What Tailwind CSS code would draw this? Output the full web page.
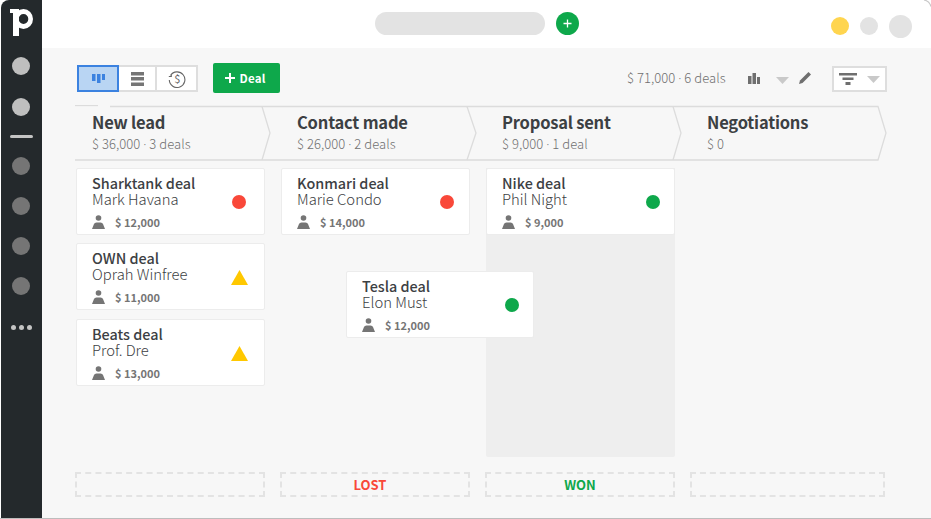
<!DOCTYPE html>
<html lang="en">
<head>
    <meta charset="UTF-8">
    <title>Pipeline</title>
    <script src="https://cdn.jsdelivr.net/npm/@tailwindcss/browser@4"></script>
</head>
<body class="bg-white overflow-hidden font-['Noto_Sans_CJK_SC','Noto_Sans',sans-serif]">
    <div class="relative flex w-[931px] h-[519px] overflow-hidden border-b border-[#bdbdbd] bg-white">
        <!-- sidebar -->
        <aside class="ml-px w-[41px] h-full shrink-0 bg-[#24292c] rounded-tl-[8px] flex flex-col items-center pr-px">
            <svg class="shrink-0" width="40" height="42" viewBox="0 0 40 42" fill="#fff">
                <path d="M9 9h9v27h-6V13H9z"/>
                <path fill-rule="evenodd" d="M22.500 9a9.500 10 0 1 1 0 20a9.500 10 0 0 1 0-20zm0 5a4.800 5 0 1 0 0 10a4.800 5 0 0 0 0-10z"/>
            </svg>
            <span class="mt-[15px] w-[18px] h-[18px] shrink-0 rounded-full bg-[#bfbfbf]"></span>
            <span class="mt-[23px] w-[18px] h-[18px] shrink-0 rounded-full bg-[#bfbfbf]"></span>
            <span class="mt-[19px] w-[23px] h-[3px] shrink-0 rounded-full bg-[#c4c4c4]"></span>
            <span class="mt-[19px] w-[18px] h-[18px] shrink-0 rounded-full bg-[#757575]"></span>
            <span class="mt-[22px] w-[18px] h-[18px] shrink-0 rounded-full bg-[#757575]"></span>
            <span class="mt-[22px] w-[18px] h-[18px] shrink-0 rounded-full bg-[#757575]"></span>
            <span class="mt-[22px] w-[18px] h-[18px] shrink-0 rounded-full bg-[#757575]"></span>
            <span class="mt-[30px] flex gap-[3px]">
                <i class="w-[5px] h-[5px] rounded-full bg-[#c4c4c4]"></i>
                <i class="w-[5px] h-[5px] rounded-full bg-[#c4c4c4]"></i>
                <i class="w-[5px] h-[5px] rounded-full bg-[#c4c4c4]"></i>
            </span>
        </aside>

        <main class="flex-1 flex flex-col bg-[#f7f7f7]">
            <!-- top bar -->
            <header class="relative h-[48px] shrink-0 bg-white flex items-center">
                <div class="ml-[333px] -mt-px w-[170px] h-[23px] rounded-full bg-[#e3e3e3]"></div>
                <div class="ml-[11px] -mt-px w-[23px] h-[23px] rounded-full bg-[#0ea84b] flex items-center justify-center">
                    <svg width="11" height="11" viewBox="0 0 11 11"><path d="M5.500 1.500v8M1.500 5.500h8" stroke="#fff" stroke-width="1.300"/></svg>
                </div>
                <div class="ml-[252px] mt-[4px] w-[18px] h-[18px] rounded-full bg-[#ffd54f]"></div>
                <div class="ml-[11px] mt-[4px] w-[18px] h-[18px] rounded-full bg-[#e3e3e3]"></div>
                <div class="ml-[11px] mt-[4px] w-[23px] h-[23px] rounded-full bg-[#e3e3e3]"></div>
                <svg class="absolute right-0 top-0" width="8" height="7" viewBox="0 0 8 7" fill="none"><path d="M1 0C4 0.500 7 3 8 6.500" stroke="#c8c8c8" stroke-width="1.200"/></svg>
            </header>

            <!-- toolbar -->
            <div class="h-[57px] shrink-0 flex items-center pl-[35px] pt-[3px]">
                <div class="flex h-[27px] mt-px w-[121px] border-2 border-[#dedede] bg-white">
                    <div class="w-[42px] -ml-[2px] -my-[2px] h-[27px] border-2 border-[#3b82e0] bg-[#b9d5f3] flex items-center justify-center">
                        <svg width="13" height="9" viewBox="0 0 13 9"><path d="M0 0h3.500v7H0zM5 0h3.500v9H5zM10 0h3v6h-3z" fill="#3b82e0"/></svg>
                    </div>
                    <div class="w-[38px] flex items-center justify-center border-r-2 border-[#dedede]">
                        <svg width="13" height="14" viewBox="0 0 13 14"><path d="M0 0h13v3.500H0zM0 5h13v3.500H0zM0 10.500h13V14H0z" fill="#757575"/></svg>
                    </div>
                    <div class="flex-1 flex items-center justify-center">
                        <svg width="18" height="18" viewBox="0 0 18 18" fill="none" stroke="#666"><path d="M2.500 5.500A7.800 7.800 0 1 1 1.300 10M0.800 6.500h2.500V4" stroke-width="1.100"/><text x="9.200" y="13" font-size="11" text-anchor="middle" fill="#666" stroke="none">$</text></svg>
                    </div>
                </div>
                <button class="ml-[15px] w-[67px] h-[30px] rounded-[2px] bg-[#0ea84b] text-white text-[11.500px] tracking-[0.2px] leading-[30px] font-bold flex items-center justify-center gap-[5px] pr-[3px]">
                    <svg width="10" height="10" viewBox="0 0 10 10"><path d="M5 0v10M0 5h10" stroke="#fff" stroke-width="2"/></svg>
                    Deal
                </button>
                <span class="ml-[347px] text-[13px] tracking-[0.05px] leading-[20px] font-light text-[#707070] whitespace-nowrap">$ 71,000 <span class="font-['Noto_Sans']">·</span> 6 deals</span>
                <svg class="ml-[22px]" width="12" height="11" viewBox="0 0 12 11"><path d="M0 3h3.500v8H0zM4.500 0H8v11H4.500zM9 4h3v7H9z" fill="#6f6f6f"/></svg>
                <svg class="ml-[16px] mt-[5px]" width="13" height="7" viewBox="0 0 13 7"><path d="M0 0h13L6.500 7z" fill="#c9c9c9"/></svg>
                <svg class="ml-[10px]" width="12" height="12" viewBox="0 0 12 12"><path d="M0 12l1-3.500L9.500 0 12 2.500 3.500 11z" fill="#6f6f6f"/></svg>
                <div class="ml-[21px] mt-px w-[55px] h-[26px] border-2 border-[#dedede] bg-white flex items-center pl-[5px]">
                    <svg width="18" height="12" viewBox="0 0 18 12"><path d="M0 0h18v2.500H0zM3.500 4.500h11V7h-11zM6.500 9h5v3h-5z" fill="#6f6f6f"/></svg>
                    <svg class="ml-[10px] mt-[2px]" width="13" height="7" viewBox="0 0 13 7"><path d="M0 0h13L6.500 7z" fill="#c9c9c9"/></svg>
                </div>
            </div>

            <!-- stage headers -->
            <div class="relative h-[55px] shrink-0 ml-[33px] flex">
                <svg class="absolute left-0 top-0" width="815" height="56" viewBox="0 0 815 56" fill="none" stroke="#dcdcdc" stroke-width="1.300">
                    <path d="M0 0.500H23" />
                    <path d="M35 1.500H803L811 28L803 55H0" />
                    <path d="M187 1.500L195 28L187 55" />
                    <path d="M392 1.500L401 28L392 55" />
                    <path d="M598 1.500L606 28L598 55" />
                </svg>
                <div class="w-[205px] pl-[17px] pt-[6px]">
                    <h2 class="text-[16.500px] tracking-[-0.2px] leading-[23px] font-bold text-[#3c4043]">New lead</h2>
                    <p class="text-[13px] tracking-[0.05px] leading-[20px] font-light text-[#707070]">$ 36,000 <span class="font-['Noto_Sans']">·</span> 3 deals</p>
                </div>
                <div class="w-[205px] pl-[17px] pt-[6px]">
                    <h2 class="text-[16.500px] tracking-[-0.2px] leading-[23px] font-bold text-[#3c4043]">Contact made</h2>
                    <p class="text-[13px] tracking-[0.05px] leading-[20px] font-light text-[#707070]">$ 26,000 <span class="font-['Noto_Sans']">·</span> 2 deals</p>
                </div>
                <div class="w-[205px] pl-[17px] pt-[6px]">
                    <h2 class="text-[16.500px] tracking-[-0.2px] leading-[23px] font-bold text-[#3c4043]">Proposal sent</h2>
                    <p class="text-[13px] tracking-[0.05px] leading-[20px] font-light text-[#707070]">$ 9,000 <span class="font-['Noto_Sans']">·</span> 1 deal</p>
                </div>
                <div class="w-[205px] pl-[17px] pt-[6px]">
                    <h2 class="text-[16.500px] tracking-[-0.2px] leading-[23px] font-bold text-[#3c4043]">Negotiations</h2>
                    <p class="text-[13px] tracking-[0.05px] leading-[20px] font-light text-[#707070]">$ 0</p>
                </div>
            </div>

            <!-- columns -->
            <div class="mt-[8px] ml-[34px] h-[289px] shrink-0 flex gap-[16px]">
                <div class="w-[189px] flex flex-col">
                    <div class="h-[67px] shrink-0 bg-white border border-[#ececec] rounded-[2px] pl-[15px] pt-[5px] flex justify-between">
                        <div>
                            <p class="text-[14.400px] leading-[17px] font-medium text-[#3c4043]">Sharktank deal</p>
                            <p class="text-[14.800px] leading-[16px] font-light text-[#3c4043]">Mark Havana</p>
                            <div class="mt-[8px] flex items-center gap-[10px] text-[11px] leading-[14px] font-bold text-[#757575]">
                                <svg width="13" height="14" viewBox="0 0 13 14"><circle cx="6.500" cy="3" r="2.800" fill="#757575"/><path d="M0 14L2 9Q2.500 7.500 4.500 7.500H8.500Q10.500 7.500 11 9L13 14z" fill="#757575"/></svg>
                                <span>$ 12,000</span>
                            </div>
                        </div>
                        <span class="mt-[21px] mr-[18px] w-[14px] h-[14px] rounded-full bg-[#f94839]"></span>
                    </div>
                    <div class="mt-[8px] h-[67px] shrink-0 bg-white border border-[#ececec] rounded-[2px] pl-[15px] pt-[5px] flex justify-between">
                        <div>
                            <p class="text-[14.400px] leading-[17px] font-medium text-[#3c4043]">OWN deal</p>
                            <p class="text-[14.800px] leading-[16px] font-light text-[#3c4043]">Oprah Winfree</p>
                            <div class="mt-[8px] flex items-center gap-[10px] text-[11px] leading-[14px] font-bold text-[#757575]">
                                <svg width="13" height="14" viewBox="0 0 13 14"><circle cx="6.500" cy="3" r="2.800" fill="#757575"/><path d="M0 14L2 9Q2.500 7.500 4.500 7.500H8.500Q10.500 7.500 11 9L13 14z" fill="#757575"/></svg>
                                <span>$ 11,000</span>
                            </div>
                        </div>
                        <svg class="mt-[21px] mr-[16px]" width="17" height="15" viewBox="0 0 17 15"><path d="M8.500 0L17 15H0z" fill="#ffc800"/></svg>
                    </div>
                    <div class="mt-[9px] h-[67px] shrink-0 bg-white border border-[#ececec] rounded-[2px] pl-[15px] pt-[5px] flex justify-between">
                        <div>
                            <p class="text-[14.400px] leading-[17px] font-medium text-[#3c4043]">Beats deal</p>
                            <p class="text-[14.800px] leading-[16px] font-light text-[#3c4043]">Prof. Dre</p>
                            <div class="mt-[8px] flex items-center gap-[10px] text-[11px] leading-[14px] font-bold text-[#757575]">
                                <svg width="13" height="14" viewBox="0 0 13 14"><circle cx="6.500" cy="3" r="2.800" fill="#757575"/><path d="M0 14L2 9Q2.500 7.500 4.500 7.500H8.500Q10.500 7.500 11 9L13 14z" fill="#757575"/></svg>
                                <span>$ 13,000</span>
                            </div>
                        </div>
                        <svg class="mt-[21px] mr-[16px]" width="17" height="15" viewBox="0 0 17 15"><path d="M8.500 0L17 15H0z" fill="#ffc800"/></svg>
                    </div>
                </div>
                <div class="w-[189px]">
                    <div class="h-[67px] bg-white border border-[#ececec] rounded-[2px] pl-[15px] pt-[5px] flex justify-between">
                        <div>
                            <p class="text-[14.400px] leading-[17px] font-medium text-[#3c4043]">Konmari deal</p>
                            <p class="text-[14.800px] leading-[16px] font-light text-[#3c4043]">Marie Condo</p>
                            <div class="mt-[8px] flex items-center gap-[10px] text-[11px] leading-[14px] font-bold text-[#757575]">
                                <svg width="13" height="14" viewBox="0 0 13 14"><circle cx="6.500" cy="3" r="2.800" fill="#757575"/><path d="M0 14L2 9Q2.500 7.500 4.500 7.500H8.500Q10.500 7.500 11 9L13 14z" fill="#757575"/></svg>
                                <span>$ 14,000</span>
                            </div>
                        </div>
                        <span class="mt-[21px] mr-[15px] w-[14px] h-[14px] rounded-full bg-[#f94839]"></span>
                    </div>
                </div>
                <div class="w-[189px] bg-[#eeeeee] rounded-b-[2px]">
                    <div class="h-[67px] bg-white border border-[#ececec] rounded-[2px] pl-[15px] pt-[5px] flex justify-between">
                        <div>
                            <p class="text-[14.400px] leading-[17px] font-medium text-[#3c4043]">Nike deal</p>
                            <p class="text-[14.800px] leading-[16px] font-light text-[#3c4043]">Phil Night</p>
                            <div class="mt-[8px] flex items-center gap-[10px] text-[11px] leading-[14px] font-bold text-[#757575]">
                                <svg width="13" height="14" viewBox="0 0 13 14"><circle cx="6.500" cy="3" r="2.800" fill="#757575"/><path d="M0 14L2 9Q2.500 7.500 4.500 7.500H8.500Q10.500 7.500 11 9L13 14z" fill="#757575"/></svg>
                                <span>$ 9,000</span>
                            </div>
                        </div>
                        <span class="mt-[21px] mr-[14px] w-[14px] h-[14px] rounded-full bg-[#0ea84b]"></span>
                    </div>
                </div>
            </div>

            <!-- drop zones -->
            <div class="mt-[15px] ml-[33px] flex gap-[15px] text-[13px] font-bold">
                <div class="w-[190px] h-[25px] border-2 border-dashed border-[#e3e3e3]"></div>
                <div class="w-[190px] h-[25px] border-2 border-dashed border-[#e3e3e3] flex items-center justify-center pr-[10px] text-[#f94839]">LOST</div>
                <div class="w-[190px] h-[25px] border-2 border-dashed border-[#e3e3e3] flex items-center justify-center text-[#0ea84b]">WON</div>
                <div class="w-[195px] h-[25px] border-2 border-dashed border-[#e3e3e3]"></div>
            </div>
        </main>

        <!-- card being dragged -->
        <div class="absolute left-[346px] top-[271px] w-[188px] h-[67px] bg-white border border-[#ececec] rounded-[2px] pl-[15px] pt-[5px] flex justify-between">
            <div>
                <p class="text-[14.400px] leading-[17px] font-medium text-[#3c4043]">Tesla deal</p>
                <p class="text-[14.800px] leading-[16px] font-light text-[#3c4043]">Elon Must</p>
                <div class="mt-[8px] flex items-center gap-[10px] text-[11px] leading-[14px] font-bold text-[#757575]">
                    <svg width="13" height="14" viewBox="0 0 13 14"><circle cx="6.500" cy="3" r="2.800" fill="#757575"/><path d="M0 14L2 9Q2.500 7.500 4.500 7.500H8.500Q10.500 7.500 11 9L13 14z" fill="#757575"/></svg>
                    <span>$ 12,000</span>
                </div>
            </div>
            <span class="mt-[21px] mr-[14px] w-[14px] h-[14px] rounded-full bg-[#0ea84b]"></span>
        </div>
    </div>
</body>
</html>
